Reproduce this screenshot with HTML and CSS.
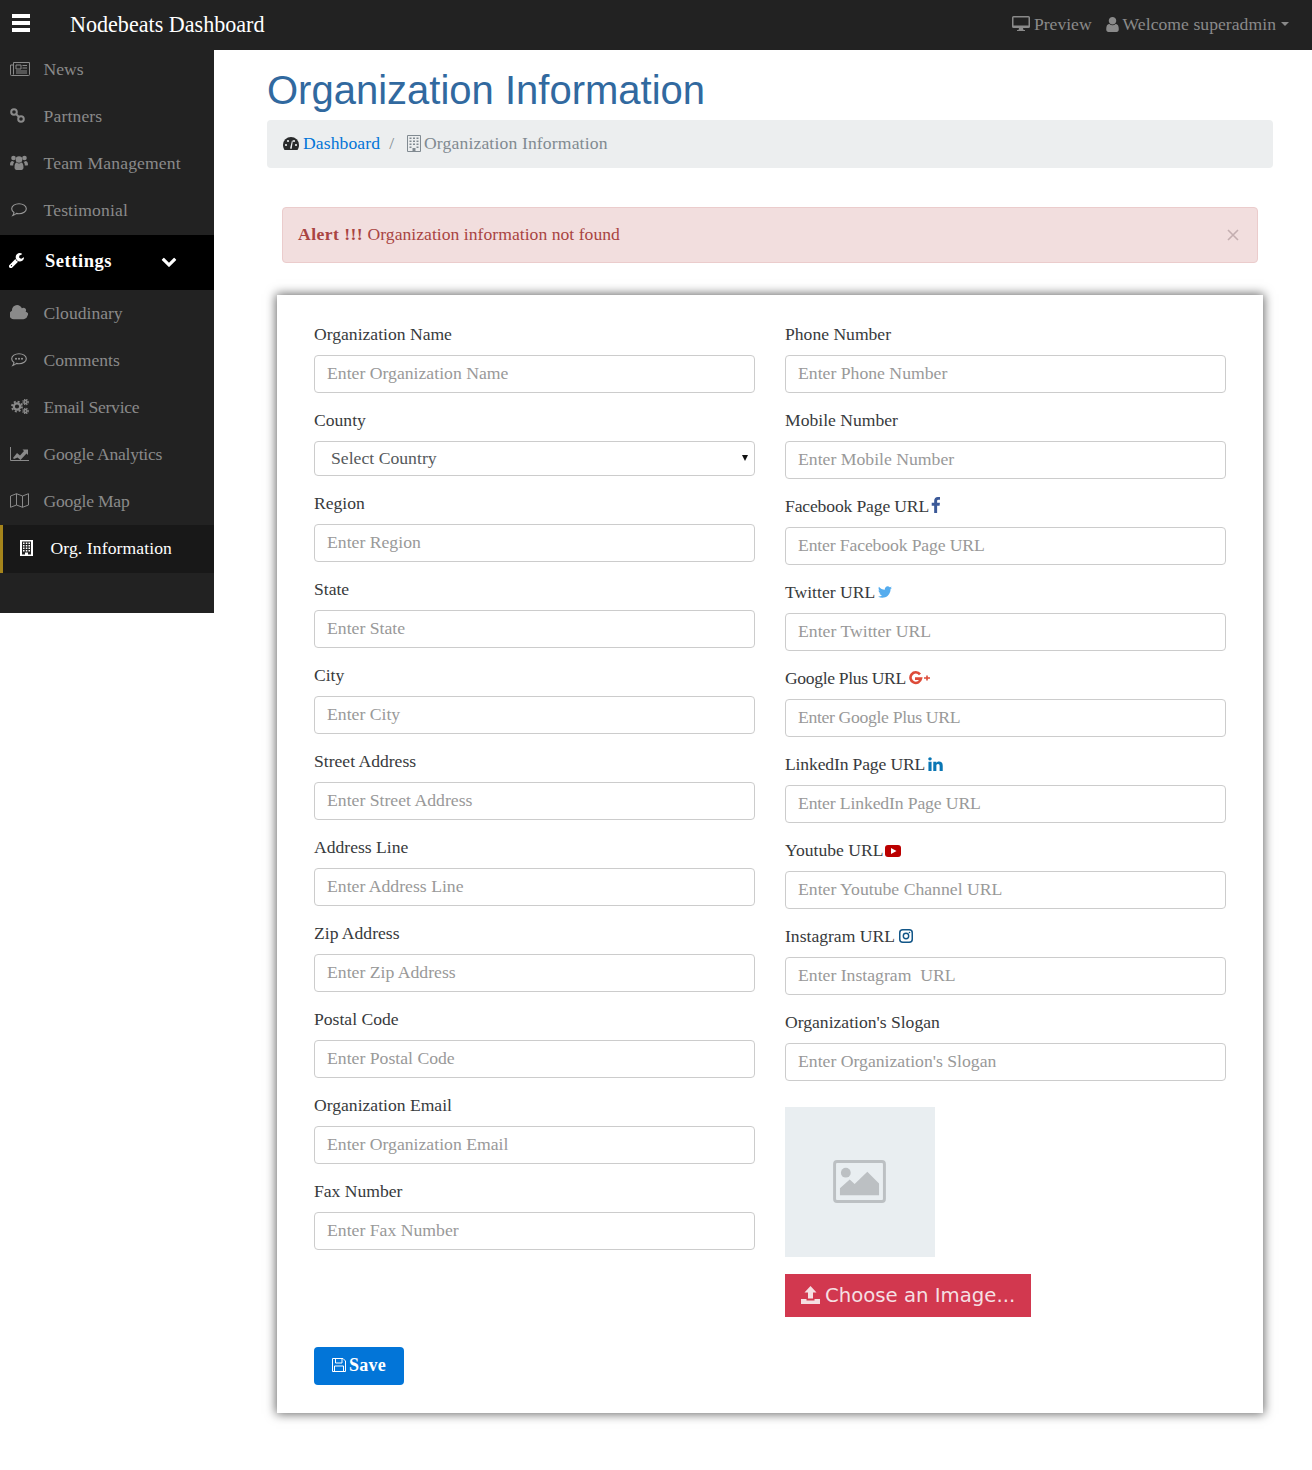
FILE: index.html
```html
<!DOCTYPE html>
<html lang="en">
<head>
<meta charset="utf-8">
<title>Organization Information</title>
<link rel="stylesheet" href="styles.css">
</head>
<body>
<header class="topbar">
  <div class="brand">
    <svg class="ic-bars" width="18" height="18" viewBox="0 0 18 18"><rect width="18" height="4" fill="#fff"/><rect y="7" width="18" height="4" fill="#fff"/><rect y="14" width="18" height="4" fill="#fff"/></svg>
    <span class="brand-name">Nodebeats Dashboard</span>
  </div>
  <div class="top-right">
    <span class="top-link"><svg width="18" height="16" viewBox="0 0 18 16"><path d="M1.500 0h15A1.500 1.500 0 0 1 18 1.500v9a1.500 1.500 0 0 1-1.500 1.500H11l.5 2H13v1H5v-1h1.500l.5-2H1.500A1.500 1.500 0 0 1 0 10.500v-9A1.500 1.500 0 0 1 1.500 0zM1.500 1.500v8h15v-8z" fill="#8a8a8a" fill-rule="evenodd"/></svg><span class="preview-text">Preview</span></span>
    <span class="top-link"><svg width="13" height="15" viewBox="256 128 1280 1536"><path d="M1536 1399q0 109-62.500 187t-150.500 78h-854q-88 0-150.500-78t-62.500-187q0-85 8.500-160.500t31.500-151.500 58.500-130 94-88.500 134.500-34.500q131 128 313 128t313-128q76 0 134.500 34.500t94 88.500 58.500 130 31.500 151.500 8.500 160.500zm-256-887q0 159-112.500 271.500t-271.500 112.500-271.500-112.500-112.500-271.500 112.500-271.500 271.500-112.500 271.500 112.500 112.500 271.500z" fill="#8a8a8a"/></svg><span class="welcome-text">Welcome superadmin</span><i class="caret"></i></span>
  </div>
</header>

<div class="layout">
  <aside class="sidebar">
    <nav class="nav">
      <a class="nav-item"><span class="nav-ic"><svg width="20" height="14" viewBox="0 0 20 14"><path d="M3.500.5h16v12a1 1 0 0 1-1 1H1.500a1 1 0 0 1-1-1V3h3zM3.500 3v9.500" fill="none" stroke="#8a8a8a"/><path d="M6 3h5v4H6zM12.500 3.500H17M12.500 6H17M6 9H17M6 11H17" fill="none" stroke="#8a8a8a"/></svg></span>News</a>
      <a class="nav-item nav-wide"><span class="nav-ic"><svg width="15" height="15" viewBox="0 0 15 15"><circle cx="4" cy="4" r="2.800" fill="none" stroke="#8a8a8a" stroke-width="2"/><circle cx="11" cy="11" r="2.800" fill="none" stroke="#8a8a8a" stroke-width="2"/><path d="M6 6l3 3" stroke="#8a8a8a" stroke-width="2"/></svg></span>Partners</a>
      <a class="nav-item nav-wide"><span class="nav-ic"><svg width="18" height="15" viewBox="0 0 18 15"><g fill="#8a8a8a"><circle cx="3.500" cy="3" r="2.300"/><circle cx="14.500" cy="3" r="2.300"/><circle cx="9" cy="4.500" r="3.300"/><path d="M0 10c0-3 1-4 2.500-4 1 .7 1.500.8 2 .8-.8 1-1.300 2-1.300 3.700H.8C.3 10.500 0 10.300 0 10zM18 10c0-3-1-4-2.500-4-1 .7-1.500.8-2 .8.800 1 1.300 2 1.300 3.700h2.400c.5 0 .8-.2.800-.5zM4.500 12.500c0-3.500 1-5 2.300-5 .6.500 1.300.9 2.200.9s1.600-.4 2.200-.9c1.300 0 2.300 1.500 2.300 5 0 1.500-1 2.500-2 2.500H6.500c-1 0-2-1-2-2.500z"/></g></svg></span>Team Management</a>
      <a class="nav-item nav-wide"><span class="nav-ic ic-pad"><svg width="16" height="14" viewBox="0 0 16 14"><path d="M8 .7c4 0 7.300 2.200 7.300 5S12 10.700 8 10.700c-1 0-1.800-.1-2.500-.3-1 .9-2.300 1.700-3.700 2.100.7-1 1.100-2 1.200-3C1.500 8.500.7 7.200.7 5.700.7 2.900 4 .7 8 .7z" fill="none" stroke="#999" stroke-width="1.100"/></svg></span>Testimonial</a>
      <a class="nav-item nav-settings">
        <span class="nav-ic"><svg width="15" height="15" viewBox="120 120 1606 1606"><path d="M448 1472q0-26-19-45t-45-19-45 19-19 45 19 45 45 19 45-19 19-45zm644-420l-682 682q-37 37-90 37-52 0-91-37l-106-108q-38-36-38-90 0-53 38-91l681-681q39 98 114.500 173.500t173.500 114.500zm634-435q0 39-23 106-47 134-164.500 217.500t-258.500 83.500q-185 0-316.500-131.500t-131.500-316.500 131.500-316.500 316.500-131.500q58 0 121.500 16.500t107.500 46.500q16 11 16 28t-16 28l-293 169v224l193 107q5-3 79-48.500t135.500-81 70.500-35.500q15 0 23.500 10t8.500 25z" fill="#fff"/></svg></span>
        <span class="settings-label">Settings</span>
        <svg class="chev" width="16" height="16" viewBox="0 0 1792 1792"><path d="M1683 808l-742 741q-19 19-45 19t-45-19l-742-741q-19-19-19-45.500t19-45.500l166-165q19-19 45-19t45 19l531 531 531-531q19-19 45-19t45 19l166 165q19 19 19 45.500t-19 45.500z" fill="#fff"/></svg>
      </a>
      <a class="nav-item"><span class="nav-ic"><svg width="18" height="15" viewBox="0 256 1792 1344"><path d="M1728 1216q0 159-112.500 271.500t-271.500 112.500h-960q-185 0-316.500-131.500t-131.500-316.500q0-132 71-241.500t187-163.500q-2-28-2-43 0-212 150-362t362-150q158 0 286.500 88t187.500 230q70-62 166-62 106 0 181 75t75 181q0 75-41 138 129 30 213 134.500t84 239.500z" fill="#8a8a8a"/></svg></span>Cloudinary</a>
      <a class="nav-item"><span class="nav-ic ic-pad"><svg width="16" height="14" viewBox="0 0 16 14"><path d="M8 .7c4 0 7.300 2.200 7.300 5S12 10.700 8 10.700c-1 0-1.800-.1-2.500-.3-1 .9-2.300 1.700-3.700 2.100.7-1 1.100-2 1.200-3C1.500 8.500.7 7.200.7 5.700.7 2.900 4 .7 8 .7z" fill="none" stroke="#999" stroke-width="1.100"/><circle cx="5" cy="5.700" r="1" fill="#999"/><circle cx="8" cy="5.700" r="1" fill="#999"/><circle cx="11" cy="5.700" r="1" fill="#999"/></svg></span>Comments</a>
      <a class="nav-item nav-narrow"><span class="nav-ic ic-pad"><svg width="18" height="15" viewBox="0 0 18 15"><g fill="none" stroke="#8a8a8a"><circle cx="6" cy="7.500" r="3.200" stroke-width="2.200"/><circle cx="6" cy="7.500" r="5" stroke-width="1.800" stroke-dasharray="2 1.930"/><circle cx="14.500" cy="3" r="1.500" stroke-width="1.500"/><circle cx="14.500" cy="3" r="2.700" stroke-width="1.200" stroke-dasharray="1.200 1"/><circle cx="14.500" cy="12" r="1.500" stroke-width="1.500"/><circle cx="14.500" cy="12" r="2.700" stroke-width="1.200" stroke-dasharray="1.200 1"/></g></svg></span>Email Service</a>
      <a class="nav-item nav-narrow"><span class="nav-ic"><svg width="19" height="14" viewBox="0 0 19 14"><path d="M.5 0v13.500H19" fill="none" stroke="#8a8a8a"/><path d="M3 11l4-5 3 2.500L14 4l-1.500-1.500H18v5.500l-1.500-1.500-6 6.500-3-2.500L4 12z" fill="#8a8a8a"/></svg></span>Google Analytics</a>
      <a class="nav-item nav-narrow"><span class="nav-ic"><svg width="19" height="15" viewBox="0 0 19 15"><path d="M.5 3L6.500.7l6 2.300 6-2.300v11.300l-6 2.300-6-2.300-6 2.300zM6.500.7V12M12.500 3v11.300" fill="none" stroke="#8a8a8a" stroke-linejoin="round"/></svg></span>Google Map</a>
      <a class="nav-item nav-active"><span class="nav-ic"><svg width="13" height="16" viewBox="0 0 13 16"><path d="M0 0h13v16H0z" fill="#fff"/><path d="M2 1.500h9v13H8V12.500H5v2H2z" fill="#222"/><path d="M3 2.500h1.500V4H3zM5.800 2.500h1.500V4H5.800zM8.500 2.500H10V4H8.500zM3 5h1.500v1.500H3zM5.800 5h1.500v1.500H5.800zM8.500 5H10v1.500H8.500zM3 7.500h1.500V9H3zM5.800 7.500h1.500V9H5.800zM8.500 7.500H10V9H8.500zM3 10h1.500v1.500H3zM5.800 10h1.500v1.500H5.800zM8.500 10H10v1.500H8.500z" fill="#fff"/></svg></span>Org. Information</a>
    </nav>
  </aside>

  <main class="main">
    <h1 class="page-title">Organization Information</h1>
    <div class="breadcrumb">
      <svg width="16" height="13" viewBox="0 0 16 13"><path d="M8 0a8 8 0 0 1 8 8c0 1.800-.5 3.500-1.500 5h-13C.5 11.500 0 9.800 0 8a8 8 0 0 1 8-8z" fill="#292b2c"/><g fill="#eceeef"><circle cx="3" cy="8" r="1.100"/><circle cx="5" cy="4" r="1.100"/><circle cx="11" cy="4" r="1.100"/><circle cx="13" cy="8" r="1.100"/><path d="M7 11.500L9 3.500l.8.2L8.700 11.700z"/></g></svg>
      <a class="crumb-link">Dashboard</a>
      <span class="crumb-sep">/</span>
      <svg width="14" height="17" viewBox="0 0 14 17"><path d="M.5.500h13v16h-13z" fill="none" stroke="#818a91"/><path d="M2.500 2.500h2v1.500h-2zM6 2.500h2v1.500H6zM9.500 2.500h2v1.500h-2zM2.500 5.500h2V7h-2zM6 5.500h2V7H6zM9.500 5.500h2V7h-2zM2.500 8.500h2V10h-2zM6 8.500h2V10H6zM9.500 8.500h2V10h-2zM2.500 11.500h2V13h-2zM9.500 11.500h2V13h-2zM5.500 13h3v3.500h-3z" fill="#818a91"/></svg>
      <span class="crumb-active">Organization Information</span>
    </div>

    <div class="alert">
      <span><strong>Alert !!!</strong> Organization information not found</span>
      <svg class="alert-close" width="12" height="12" viewBox="0 0 12 12"><path d="M1 1l10 10M11 1L1 11" stroke="#c4aeb0" stroke-width="1.600"/></svg>
    </div>

    <form class="card">
      <div class="columns">
        <div class="col">
          <div class="field"><label>Organization Name</label><input placeholder="Enter Organization Name"></div>
          <div class="field"><label>County</label><div class="select-wrap"><select><option>Select Country</option></select></div></div>
          <div class="field"><label>Region</label><input placeholder="Enter Region"></div>
          <div class="field"><label>State</label><input placeholder="Enter State"></div>
          <div class="field"><label>City</label><input placeholder="Enter City"></div>
          <div class="field"><label>Street Address</label><input placeholder="Enter Street Address"></div>
          <div class="field"><label>Address Line</label><input placeholder="Enter Address Line"></div>
          <div class="field"><label>Zip Address</label><input placeholder="Enter Zip Address"></div>
          <div class="field"><label>Postal Code</label><input placeholder="Enter Postal Code"></div>
          <div class="field"><label>Organization Email</label><input placeholder="Enter Organization Email"></div>
          <div class="field"><label>Fax Number</label><input placeholder="Enter Fax Number"></div>
        </div>
        <div class="col">
          <div class="field"><label>Phone Number</label><input placeholder="Enter Phone Number"></div>
          <div class="field"><label>Mobile Number</label><input placeholder="Enter Mobile Number"></div>
          <div class="field tight"><label>Facebook Page URL <svg class="ic-fb" width="10" height="16" viewBox="300 0 1040 1664"><path d="M1343 12v264h-157q-86 0-116 36t-30 108v189h293l-39 296h-254v759h-306v-759h-255v-296h255v-218q0-186 104-288.500t277-102.500q147 0 228 12z" fill="#3b5998"/></svg></label><input placeholder="Enter Facebook Page URL"></div>
          <div class="field"><label>Twitter URL <svg width="14" height="14" viewBox="110 130 1580 1530"><path d="M1684 408q-67 98-162 167 1 14 1 42 0 130-38 259.500t-115.500 248.500-184.500 210.500-258 146-323 54.500q-271 0-496-145 35 4 78 4 225 0 401-138-105-2-188-64.500t-114-159.500q33 5 61 5 43 0 85-11-112-23-185.500-111.500t-73.500-205.500v-4q68 38 146 41-66-44-105-115t-39-154q0-88 44-163 121 149 294.500 238.500t371.500 99.500q-8-38-8-74 0-134 94.500-228.500t228.500-94.500q140 0 236 102 109-21 205-78-37 115-142 178 92-10 184-50z" fill="#55acee"/></svg></label><input placeholder="Enter Twitter URL"></div>
          <div class="field tighter"><label>Google Plus URL <svg width="22" height="14" viewBox="0 0 22 14"><path d="M12 3.400A5.300 5.300 0 1 0 13 7.600H7" fill="none" stroke="#dd4b39" stroke-width="2.600"/><path d="M16 7h6M19 4.500v5" stroke="#dd4b39" stroke-width="1.600"/></svg></label><input placeholder="Enter Google Plus URL"></div>
          <div class="field tight"><label>LinkedIn Page URL <svg width="15" height="14" viewBox="128 128 1536 1488"><path d="M477 625v991h-330v-991h330zm21-306q1 73-50.500 122t-135.500 49h-2q-82 0-132-49t-50-122q0-74 51.500-122.500t134.500-48.500 133 48.500 51 122.500zm1166 729v568h-329v-530q0-105-40.500-164.500t-126.500-59.500q-63 0-105.500 34.500t-63.500 85.500q-11 30-11 81v553h-329q2-399 2-647t-1-296l-1-48h329v144h-2q20-32 41-56t56.500-52 87-43.500 114.500-15.500q171 0 275 113.500t104 332.500z" fill="#0976b4"/></svg></label><input placeholder="Enter LinkedIn Page URL"></div>
          <div class="field"><label>Youtube URL <svg class="ic-yt" width="16" height="12" viewBox="0 0 16 12"><rect width="16" height="12" rx="3" fill="#bb0000"/><path d="M6 3l5.500 3L6 9z" fill="#fff"/></svg></label><input placeholder="Enter Youtube Channel URL"></div>
          <div class="field"><label>Instagram URL <svg class="ic-ig" width="14" height="14" viewBox="0 0 14 14"><rect x=".75" y=".75" width="12.500" height="12.500" rx="3" fill="none" stroke="#125688" stroke-width="1.500"/><circle cx="7" cy="7" r="2.700" fill="none" stroke="#125688" stroke-width="1.400"/><circle cx="10.500" cy="3.500" r=".8" fill="#125688"/></svg></label><input placeholder="Enter Instagram  URL"></div>
          <div class="field"><label>Organization's Slogan</label><input placeholder="Enter Organization's Slogan"></div>
          <div class="image-box">
            <svg width="53" height="43" viewBox="0 0 54 44"><rect x="1.500" y="1.500" width="51" height="41" rx="2.500" fill="none" stroke="#bcc0c3" stroke-width="3"/><circle cx="13" cy="13" r="5" fill="#bcc0c3"/><path d="M7 36V29l10-9 5 4.500L35 12l12 12v12z" fill="#bcc0c3"/></svg>
          </div>
          <button type="button" class="choose"><svg width="19" height="18" viewBox="0 0 19 18"><path d="M9.500 0l6 6.500H12v6H7v-6H3.500z" fill="#f5dfe2"/><path d="M0 13h5.500v1.500h8V13H19v5H0z" fill="#f5dfe2"/></svg>Choose an Image...</button>
        </div>
      </div>
      <button type="button" class="save"><svg width="14" height="14" viewBox="0 0 14 14"><path d="M.5.500h10.500l2.500 2.500v10.500H.5zM3.500.500v4.500h6.500V.500M2.500 13.500V8h9v5.500" fill="none" stroke="#fff"/></svg> Save</button>
    </form>
  </main>
</div>
</body>
</html>
```

FILE: styles.css
```css
* { box-sizing: border-box; }
html, body { margin: 0; padding: 0; }
body {
  font-family: "Liberation Serif", "Times New Roman", serif;
  font-size: 17.600px;
  line-height: 24px;
  color: #373a3c;
  background: #fff;
}
svg { flex: none; }

.topbar {
  height: 50px;
  background: #222;
  display: flex;
  align-items: center;
  justify-content: space-between;
  padding: 0 23px 0 12px;
}
.brand { display: flex; align-items: center; }
.ic-bars { margin-bottom: 4px; }
.brand-name { margin-left: 40px; color: #fff; font-size: 22.100px; }
.top-right { display: flex; align-items: center; gap: 14px; color: #8a8a8a; padding-bottom: 2px; }
.top-link { display: inline-flex; align-items: center; }
.preview-text { margin-left: 4px; }
.welcome-text { margin-left: 4px; letter-spacing: .05px; }
.caret {
  width: 0; height: 0; margin-left: 5px;
  border-top: 4px solid #8a8a8a;
  border-left: 4px solid transparent;
  border-right: 4px solid transparent;
}

.layout { display: flex; align-items: flex-start; }
.sidebar {
  width: 214px;
  flex: none;
  height: 563px;
  background: #222;
  overflow: hidden;
}
.nav { margin-top: -4px; display: flex; flex-direction: column; }
.nav-item {
  height: 47px;
  display: flex;
  align-items: center;
  padding: 0 0 2px 10px;
  color: #8a8a8a;
}
.nav-wide { letter-spacing: .15px; }
.nav-narrow { letter-spacing: -.25px; }
.nav-ic { width: 33.500px; display: flex; align-items: center; }
.ic-pad { padding-left: 1px; }
.nav-settings {
  height: 55px;
  margin-top: 1px;
  background: #000;
  color: #fff;
  padding: 0 0 4px 9px;
  font-weight: 700;
  font-size: 18.500px;
  letter-spacing: .55px;
}
.nav-settings .nav-ic { width: 36px; }
.settings-label { width: 116px; }
.nav-active {
  height: 48px;
  background: #181818;
  border-left: 3px solid #a5841b;
  padding-left: 17px;
  color: #fff;
  letter-spacing: .1px;
}
.nav-active .nav-ic { width: 30.500px; }

.main { flex: 1; min-width: 0; padding: 0 39px 57px 53px; }
.page-title {
  margin: 17px 0 7px;
  height: 46px;
  font-family: "Liberation Sans", Arial, sans-serif;
  font-size: 40px;
  line-height: 46px;
  font-weight: 400;
  color: #31699f;
}
.breadcrumb {
  height: 48px;
  display: flex;
  align-items: center;
  padding: 0 16px 2px;
  background: #eceeef;
  border-radius: 4px;
}
.crumb-link { margin-left: 4px; color: #0275d8; letter-spacing: .1px; }
.crumb-sep { margin: 0 13px 0 9px; color: #818a91; }
.crumb-active { margin-left: 3px; color: #818a91; letter-spacing: .15px; }

.alert {
  margin: 39px 15px 32px;
  height: 56px;
  display: flex;
  align-items: center;
  justify-content: space-between;
  padding: 0 18px 2px 15px;
  background: #f2dede;
  border: 1px solid #ebcccc;
  border-radius: 4px;
  color: #a94442;
  letter-spacing: .03px;
}
.alert strong { letter-spacing: .45px; }
.alert-close { margin-top: 2px; }

.card {
  margin: 0 10px;
  padding: 28px 37px;
  background: #fff;
  box-shadow: 0 0 10px 1px rgba(0, 0, 0, .6);
}
.columns { display: grid; grid-template-columns: 441px 441px; column-gap: 30px; }
.field { margin-bottom: 16px; }
.tight { letter-spacing: -.15px; }
.tighter { letter-spacing: -.35px; }
.field label { display: block; height: 24px; margin-bottom: 8px; line-height: 22px; white-space: pre; }
.field label svg { vertical-align: -1px; margin-left: -1px; }
.field label .ic-fb { margin-left: -3px; }
.field label .ic-yt { margin-left: -2px; }
.field label .ic-ig { margin-left: 0; }
.field input, .field select {
  display: block;
  width: 100%;
  height: 38px;
  padding: 0 12px 2px;
  border: 1px solid #ccc;
  border-radius: 4px;
  background: #fff;
  font: inherit;
  font-size: 17.700px;
  letter-spacing: inherit;
  color: #55595c;
}
.field input::placeholder { color: #999; opacity: 1; }
.select-wrap { position: relative; }
.select-wrap::after {
  content: "";
  position: absolute;
  top: 14px;
  right: 7px;
  border-top: 6px solid #111;
  border-left: 3px solid transparent;
  border-right: 3px solid transparent;
}
.field select {
  height: 35px;
  padding-left: 16px;
  appearance: none;
  -webkit-appearance: none;
}

.image-box {
  width: 150px;
  height: 150px;
  margin-top: 26px;
  padding: 0 1px 1px 0;
  display: flex;
  align-items: center;
  justify-content: center;
  background: #e9eef1;
}
.choose {
  margin-top: 17px;
  width: 246px;
  height: 43px;
  display: flex;
  align-items: center;
  gap: 5px;
  padding: 0 0 1px 16px;
  border: 0;
  background: #d2384f;
  color: #f5dfe2;
  font-family: "DejaVu Sans", Verdana, sans-serif;
  font-size: 19.700px;
}
.save {
  margin-top: 30px;
  width: 90px;
  height: 38px;
  display: flex;
  align-items: center;
  justify-content: center;
  gap: 3px;
  padding: 0 0 2px;
  border: 0;
  border-radius: 4px;
  background: #0275d8;
  color: #fff;
  font: inherit;
  font-size: 18px;
  font-weight: 700;
  letter-spacing: .3px;
}
```
